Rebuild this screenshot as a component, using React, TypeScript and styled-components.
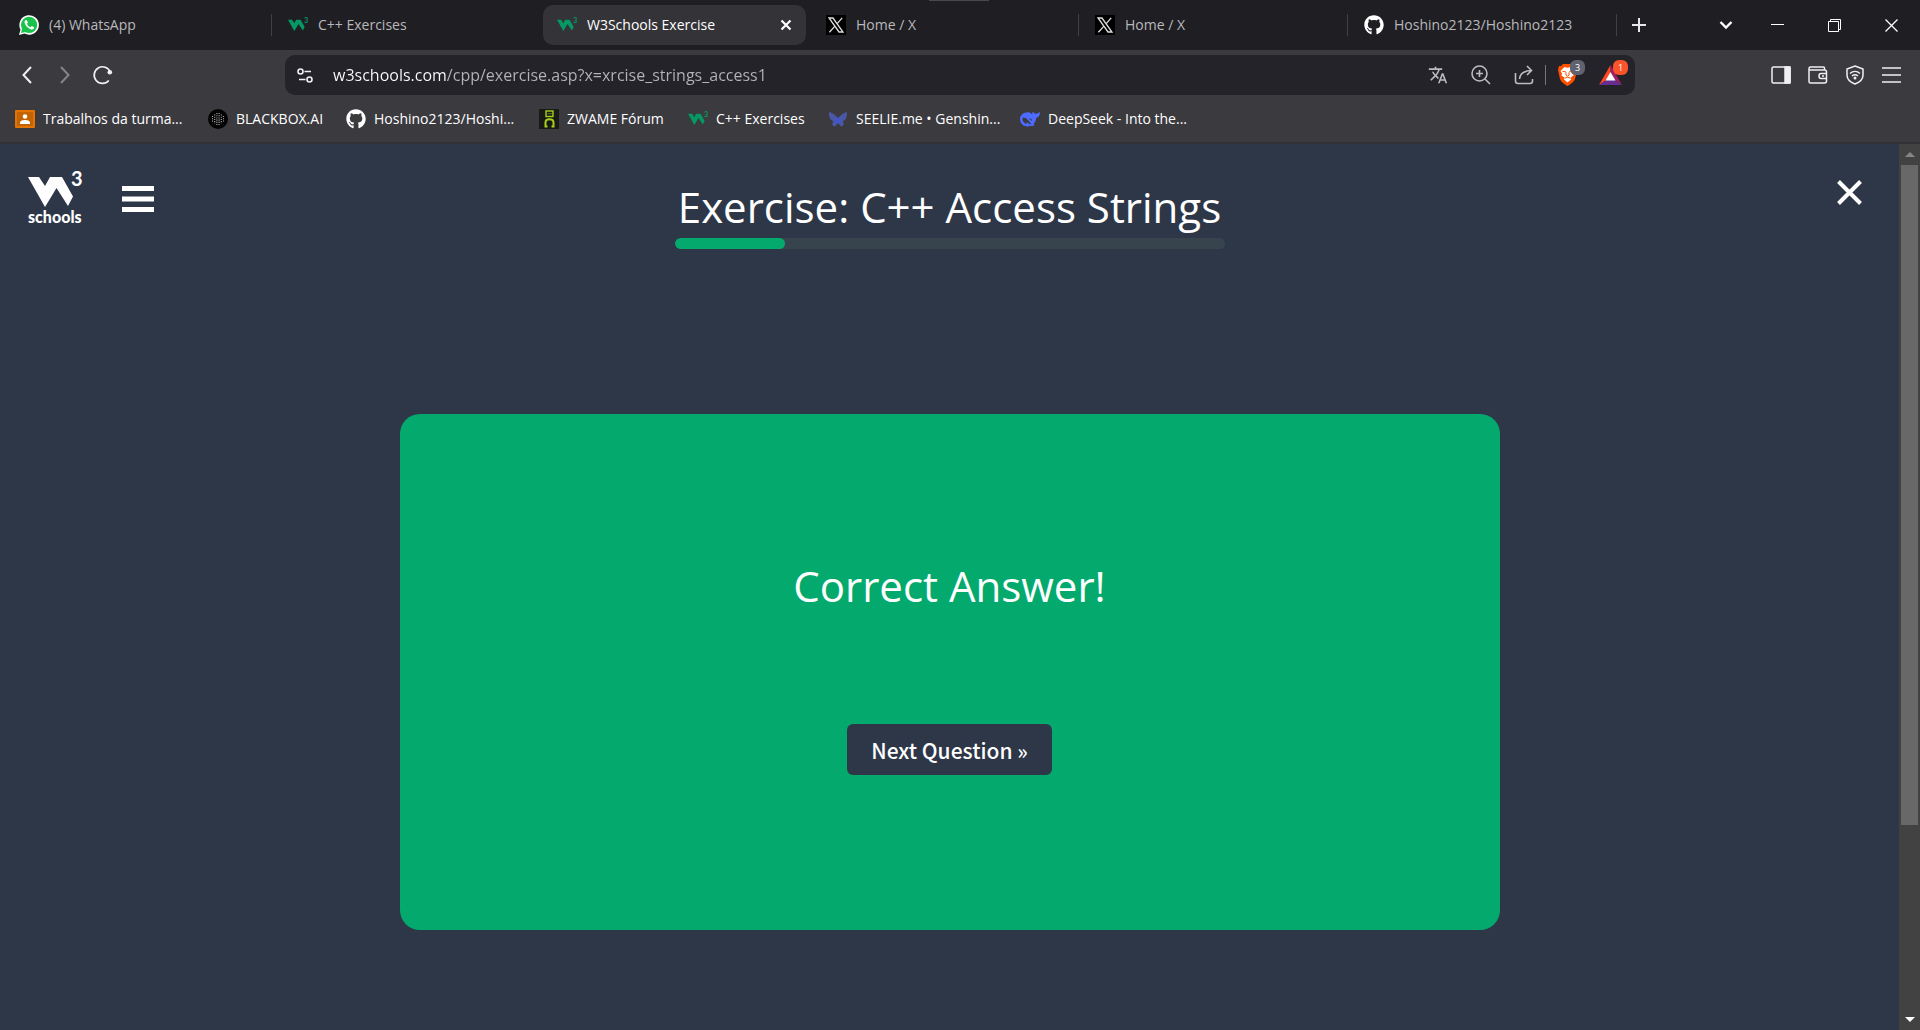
import React from "react";
import styled, { createGlobalStyle, css } from "styled-components";
import { FaGithub } from "react-icons/fa6";
import { MdTranslate } from "react-icons/md";

const ui = `"Open Sans", "Noto Sans", sans-serif`;
const c = {
  strip: "#1f1e23",
  bar: "#3b3a3f",
  field: "#242329",
  active: "#343338",
  page: "#2e3748",
  green: "#04aa6d",
};

const Global = createGlobalStyle`
  *, *::before, *::after { box-sizing: border-box; }
  body { margin: 0; background: ${c.page}; font-family: ${ui}; }
  button { font: inherit; color: inherit; border: 0; padding: 0; background: none; cursor: pointer; }
  a { color: inherit; text-decoration: none; }
  svg { display: block; flex: none; overflow: visible; }
`;

const Window = styled.div`
  display: flex;
  flex-direction: column;
  min-height: 100vh;
`;

/* ---------- browser chrome ---------- */

const TabStrip = styled.div`
  position: relative;
  display: flex;
  align-items: center;
  justify-content: space-between;
  height: 50px;
  padding-left: 3px;
  background: ${c.strip};
  color: #b9b9bc;
`;
const DragHandle = styled.div`
  position: absolute;
  top: 0;
  left: 50%;
  width: 60px;
  height: 1px;
  margin-left: -31px;
  background: #4a4a4c;
`;
const Tabs = styled.div`
  display: flex;
  align-items: center;
  flex: 1;
`;
const TabItem = styled.div<{ $line?: boolean }>`
  display: flex;
  align-items: center;
  flex: 0 1 269px;
  min-width: 0;
  height: 40px;
  padding: 0 3px 0 2px;
  border-right: 1px solid transparent;
  border-image: linear-gradient(
      transparent 25%,
      ${(p) => (p.$line ? "#414046" : "transparent")} 25% 75%,
      transparent 75%
    )
    1;
`;
const TabButton = styled.button<{ $active?: boolean }>`
  display: flex;
  align-items: center;
  gap: 10px;
  flex: 1;
  min-width: 0;
  height: 40px;
  padding: 0 14px;
  border-radius: 10px;
  font-size: 14px;
  line-height: 20px;
  text-align: left;
  white-space: nowrap;
  ${(p) =>
    p.$active &&
    css`
      background: ${c.active};
      color: #fff;
    `}
`;
const TabTitle = styled.span`
  flex: 1;
  overflow: hidden;
`;
const NewTab = styled.button`
  display: grid;
  place-items: center;
  width: 44px;
  height: 40px;
  color: #e8e8ea;
`;
const WindowControls = styled.div`
  display: flex;
`;
const WindowButton = styled.button<{ $w?: number }>`
  display: grid;
  place-items: center;
  width: ${(p) => p.$w ?? 57}px;
  height: 50px;
  color: #fff;
`;

const Toolbar = styled.div`
  display: flex;
  align-items: center;
  height: 50px;
  background: ${c.bar};
`;
const IconButton = styled.button<{ $dim?: boolean }>`
  display: grid;
  place-items: center;
  width: 38px;
  height: 40px;
  color: ${(p) => (p.$dim ? "#85848a" : "#f0f0f2")};
`;
const NavGroup = styled.div`
  display: flex;
  width: 285px;
  padding-left: 8px;
`;
const ToolGroup = styled.div`
  display: flex;
  justify-content: flex-end;
  width: 285px;
  padding-right: 10px;

  ${IconButton} {
    width: 37px;
  }
`;
const Address = styled.div`
  display: flex;
  align-items: center;
  flex: 1;
  min-width: 0;
  height: 40px;
  padding: 0 3px 0 1px;
  border-radius: 10px;
  background: ${c.field};
`;
/* The domain is painted white and the path grey by clipping a two-stop background to the text. */
const Url = styled.input`
  flex: 1;
  min-width: 0;
  height: 30px;
  padding: 0 0 0 9px;
  border: 0;
  outline: 0;
  background: linear-gradient(90deg, #fff 0 123px, #b4b4b9 123px);
  -webkit-background-clip: text;
  background-clip: text;
  color: transparent;
  font-family: ${ui};
  font-size: 16px;
  line-height: 24px;
`;
const FieldButton = styled(IconButton)`
  position: relative;
  width: 43px;
  color: #bcbcc0;
`;
const FieldLine = styled.span`
  width: 1px;
  height: 20px;
  background: #77777c;
`;
const Badge = styled.span<{ $bg: string }>`
  position: absolute;
  top: 5px;
  left: 24px;
  width: 15px;
  height: 15px;
  border-radius: 6px;
  background: ${(p) => p.$bg};
  color: #fff;
  font-size: 9px;
  line-height: 15px;
  text-align: center;
`;

const Bookmarks = styled.nav`
  display: grid;
  grid-template-columns: 193px 138px 193px 149px 140px 192px auto;
  justify-content: start;
  align-items: center;
  height: 44px;
  padding: 0 15px 5px;
  border-bottom: 2px solid #323136;
  background: ${c.bar};
  color: #fff;
`;
const Bookmark = styled.a`
  display: flex;
  align-items: center;
  gap: 8px;
  font-size: 14px;
  line-height: 20px;
  white-space: nowrap;
`;

/* ---------- page ---------- */

const Viewport = styled.div`
  display: flex;
  flex: 1;
  background: ${c.page};
`;
const Page = styled.main`
  flex: 1;
  min-width: 0;
  color: #fff;
`;
const Header = styled.header`
  display: grid;
  grid-template-columns: 1fr minmax(auto, 550px) 1fr;
  align-items: start;
  padding: 28px 28px 0;
`;
const HeaderLeft = styled.div`
  display: flex;
  align-items: center;
  gap: 40px;
`;
const Logo = styled.a`
  display: block;
  width: 54px;
`;
const LogoWord = styled.span`
  display: block;
  font-family: Lato, sans-serif;
  font-weight: 900;
  font-size: 16px;
  line-height: 17px;
`;
const PlainButton = styled.button`
  display: block;
`;
const CloseButton = styled(PlainButton)`
  justify-self: end;
  margin: 7px 8px 0 0;
`;
const Title = styled.h1`
  margin: 4px 0 0;
  font-weight: 400;
  font-size: 42px;
  line-height: 62px;
  text-align: center;
  white-space: nowrap;
`;
const Progress = styled.div`
  height: 11px;
  overflow: hidden;
  border-radius: 6px;
  background: #38444d;
`;
const ProgressFill = styled.div`
  height: 100%;
  border-radius: 6px;
  background: ${c.green};
`;
const Card = styled.section`
  display: flex;
  flex-direction: column;
  align-items: center;
  width: calc(100% - 48px);
  max-width: 1100px;
  margin: 165px auto 100px;
  padding: 141px 24px 155px;
  border-radius: 20px;
  background: ${c.green};
`;
const Result = styled.h2`
  margin: 0 0 107px;
  font-weight: 400;
  font-size: 42px;
  line-height: 62px;
`;
const NextButton = styled.button`
  height: 51px;
  padding: 0 24px;
  border-radius: 6px;
  background: ${c.page};
  color: #fff;
  font-family: "Noto Sans CJK SC", "Noto Sans", sans-serif;
  font-size: 21px;
  font-weight: 500;
  line-height: 30px;
`;
const ScrollTrack = styled.div`
  display: flex;
  flex-direction: column;
  width: 21px;
  background: #424242;
`;
const ScrollArrow = styled.button<{ $on?: boolean }>`
  display: grid;
  place-items: center;
  width: 21px;
  height: 21px;
  color: ${(p) => (p.$on ? "#fff" : "#868686")};
`;
const ScrollLane = styled.div`
  flex: 1;
  padding: 0 2px;
`;
const ScrollThumb = styled.div`
  height: 78.2%;
  background: #686868;
`;

/* ---------- icons ---------- */

const W3Mark = ({ w, color }: { w: number; color: string }) => (
  <svg width={w} height={(w * 36) / 54} viewBox="0 0 54 36" fill={color}>
    <path d="M0 5H11L17 14L22 5H34L45 24.5L40 34L28.5 16L17 35Z" />
    <text x="43" y="14" fontFamily="Lato, sans-serif" fontWeight="700" fontSize="20">
      3
    </text>
  </svg>
);
const W3Icon = () => <W3Mark w={20} color="#059862" />;

const WhatsAppIcon = () => (
  <svg width="20" height="20" viewBox="0 0 20 20">
    <path d="M0 20L1.5 14.6A9.8 9.8 0 1 1 5.5 18.6Z" fill="#fff" />
    <circle cx="10.1" cy="9.9" r="8.1" fill="#19c24b" />
    <path d="M2 18L3 13.6L6.5 17Z" fill="#19c24b" />
    <path
      d="M6.8 5.1C5.4 5.8 5.1 7.5 6.2 9.3C7.5 11.7 9.2 13.3 11.6 14.2C13.5 14.9 15 14 15.1 12.2L12.8 11L11.7 12.3C9.8 11.6 8.7 10.5 7.9 8.8L8.9 7.7L7.9 5.2Z"
      fill="#fff"
    />
  </svg>
);
const XIcon = () => (
  <svg width="20" height="20" viewBox="0 0 20 20">
    <rect width="20" height="20" fill="#000" />
    <path d="M3 3H7L17 17H13Z" fill="none" stroke="#ddd" strokeWidth="1.3" />
    <path d="M16.2 2.8L11.2 8.6M8.7 11.4L3.4 17.3" stroke="#ddd" strokeWidth="1.3" />
  </svg>
);
const ClassroomIcon = () => (
  <svg width="20" height="18" viewBox="0 0 20 18">
    <rect width="20" height="18" rx="1" fill="#e37400" />
    <rect x="2" y="2" width="16" height="14" fill="#c26401" />
    <circle cx="10" cy="6.5" r="2.3" fill="#fff" />
    <path d="M5 14V12.5C5 10.8 8 10 10 10S15 10.8 15 12.5V14Z" fill="#fff" />
  </svg>
);
const BlackboxIcon = () => (
  <svg width="20" height="20" viewBox="0 0 20 20">
    <circle cx="10" cy="10" r="10" fill="#030303" />
    <path
      d="M4.5 7V13M6.7 5.5V14.5M8.9 4V16M11.1 4V16M13.3 5.5V14.5M15.5 7V13"
      stroke="#b4b4b4"
      strokeWidth="1.1"
      strokeDasharray="1.1 1.1"
    />
  </svg>
);
const ZwameIcon = () => (
  <svg width="20" height="20" viewBox="0 0 20 20">
    <rect width="20" height="20" fill="#191a16" />
    <g fill="none" stroke="#a6cf1d">
      <rect x="7" y="2" width="7" height="5.5" strokeWidth="1.4" />
      <path d="M8.5 4.7H13" strokeWidth="1" stroke="#64782a" />
      <path d="M8.5 17.5H6.5V13.5C6.500 9 14.5 9 14.5 13.5V17.5H12.5" strokeWidth="2" />
    </g>
  </svg>
);
const ButterflyIcon = () => (
  <svg width="20" height="20" viewBox="0 0 20 20">
    <path
      d="M1 3C5 4 8 6 10 10C12 6 15 4 19 3C19 8 18 11 14.5 12.5C17 15 15 18 12.5 17L10 13.5L7.5 17C5 18 3 15 5.5 12.5C2 11 1 8 1 3Z"
      fill="#4b58a8"
    />
    <path d="M10 8L13 12L10 15L7 12Z" fill="#4254d6" />
  </svg>
);
const WhaleIcon = () => (
  <svg width="20" height="20" viewBox="0 0 20 20">
    <path
      d="M8 3.2C10 3 11 4.5 12.2 5.3C12.2 4 12.4 3 13.2 2.5C13.7 4.2 14.8 4.8 16 4.7C17.5 4.3 18.5 3.5 20 3.2C20 6.3 18.7 8.2 16.3 8.8C16 11.5 15 13.5 13.6 15.2L14.4 16.6C13 17.3 12 16.9 11 16.7C5 19 0 15.5 0 10C0 6 3.5 3.2 8 3.2Z"
      fill="#4d6bfe"
    />
    <path
      d="M2.5 9C5.5 8.3 7.8 10.6 9.5 13L11.5 15.3C9.5 15.2 8.3 14.2 7 13.2L6.2 15C4 14 2.3 12.3 2.5 9ZM9.2 9.7C10.8 9 12.2 10.2 12 12Z"
      fill={c.bar}
    />
  </svg>
);
const BatIcon = () => (
  <svg width="23" height="20" viewBox="0 0 23 20">
    <path d="M11.5 0L0 20L7.5 15L11.5 8Z" fill="#ff4724" />
    <path d="M11.5 0L23 20L15.5 15L11.5 8Z" fill="#9e1f63" />
    <path d="M0 20H23L15.5 15H7.5Z" fill="#662d91" />
    <path d="M11.5 7L16.5 15.5H6.5Z" fill="#fff" />
  </svg>
);
const BraveIcon = () => (
  <svg width="19" height="22" viewBox="0 0 19 22">
    <path d="M5 0H14L16 2H18L19 6L17 15C16 18 12 20.5 9.5 22C7 20.5 3 18 2 15L0 6L1 2H3Z" fill="#ff5000" />
    <path
      d="M6.5 3L9.5 3.8L12.5 3L16.5 7L15 9.5L15.5 11.5L12 14L13.3 15.3L9.5 18.5L5.7 15.3L7 14L3.5 11.5L4 9.5L2.5 7Z"
      fill="#fff"
    />
    <path
      d="M4.5 7.3L8 8M14.5 7.3L11 8M8.2 8.5L7.8 11L9.5 12.2L11.2 11L10.8 8.5M7 14L9.5 13.2L12 14"
      fill="none"
      stroke="#ff5000"
      strokeWidth="1"
    />
  </svg>
);

/** Shared attributes for outline icons. */
const line = (w = 1.5) => ({ fill: "none", stroke: "currentColor", strokeWidth: w });

type Site = "wa" | "w3" | "x" | "gh";
const Favicon = ({ site }: { site: Site }) => {
  if (site === "wa") return <WhatsAppIcon />;
  if (site === "w3") return <W3Icon />;
  if (site === "x") return <XIcon />;
  return <FaGithub size={20} color="#fff" />;
};

const tabs: { site: Site; title: string; active?: boolean; line?: boolean }[] = [
  { site: "wa", title: "(4) WhatsApp", line: true },
  { site: "w3", title: "C++ Exercises" },
  { site: "w3", title: "W3Schools Exercise", active: true },
  { site: "x", title: "Home / X", line: true },
  { site: "x", title: "Home / X", line: true },
  { site: "gh", title: "Hoshino2123/Hoshino2123", line: true },
];

const bookmarks: { icon: React.ReactNode; label: string }[] = [
  { icon: <ClassroomIcon />, label: "Trabalhos da turma..." },
  { icon: <BlackboxIcon />, label: "BLACKBOX.AI" },
  { icon: <FaGithub size={20} />, label: "Hoshino2123/Hoshi..." },
  { icon: <ZwameIcon />, label: "ZWAME Fórum" },
  { icon: <W3Icon />, label: "C++ Exercises" },
  { icon: <ButterflyIcon />, label: "SEELIE.me • Genshin..." },
  { icon: <WhaleIcon />, label: "DeepSeek - Into the..." },
];

const answered = 1;
const questions = 5;

export default function App() {
  return (
    <Window>
      <Global />
      <TabStrip>
        <DragHandle />
        <Tabs>
          {tabs.map((t, i) => (
            <TabItem key={i} $line={t.line}>
              <TabButton $active={t.active}>
                <Favicon site={t.site} />
                <TabTitle>{t.title}</TabTitle>
                {t.active && (
                  <svg width="12" height="12" viewBox="0 0 12 12" {...line(2.2)}>
                    <path d="M1.5 1.5L10.5 10.5M10.5 1.5L1.5 10.5" />
                  </svg>
                )}
              </TabButton>
            </TabItem>
          ))}
          <NewTab aria-label="New tab">
            <svg width="14" height="14" viewBox="0 0 14 14" {...line(2)}>
              <path d="M7 0V14M0 7H14" />
            </svg>
          </NewTab>
        </Tabs>
        <WindowControls>
          <WindowButton $w={46} aria-label="Search tabs">
            <svg width="14" height="10" viewBox="0 0 14 10" {...line(2.4)}>
              <path d="M1.5 2L7 7.5L12.5 2" />
            </svg>
          </WindowButton>
          <WindowButton aria-label="Minimize">
            <svg width="13" height="13" viewBox="0 0 13 13" {...line(1)}>
              <path d="M0 5.5H13" />
            </svg>
          </WindowButton>
          <WindowButton aria-label="Restore">
            <svg width="13" height="13" viewBox="0 0 13 13" {...line(1)}>
              <path d="M0.5 2.5H10.5V12.5H0.5ZM2.5 2.5V0.5H12.5V10.5H10.5" />
            </svg>
          </WindowButton>
          <WindowButton aria-label="Close">
            <svg width="13" height="13" viewBox="0 0 13 13" {...line(1.3)}>
              <path d="M0.5 0.5L12.5 12.5M12.5 0.5L0.5 12.5" />
            </svg>
          </WindowButton>
        </WindowControls>
      </TabStrip>

      <Toolbar>
        <NavGroup>
          <IconButton aria-label="Back">
            <svg width="10" height="18" viewBox="0 0 10 18" {...line(2)}>
              <path d="M9 1L1.5 9L9 17" />
            </svg>
          </IconButton>
          <IconButton $dim aria-label="Forward">
            <svg width="10" height="18" viewBox="0 0 10 18" {...line(2)}>
              <path d="M1 1L8.5 9L1 17" />
            </svg>
          </IconButton>
          <IconButton aria-label="Reload">
            <svg width="20" height="20" viewBox="0 0 20 20" {...line(1.7)}>
              <path d="M15.8 15.5A8.3 8.3 0 1 1 17.2 7" />
              <circle cx="16.8" cy="7.3" r="2.3" fill="currentColor" stroke="none" />
            </svg>
          </IconButton>
        </NavGroup>
        <Address>
          <IconButton aria-label="Site settings">
            <svg width="16" height="15" viewBox="0 0 16 15" {...line(1.6)}>
              <circle cx="3.5" cy="3.5" r="2.5" />
              <circle cx="12.5" cy="11.5" r="2.5" />
              <path d="M7.5 3.5H14M2 11.5H8.5" />
            </svg>
          </IconButton>
          <Url
            aria-label="Address"
            defaultValue="w3schools.com/cpp/exercise.asp?x=xrcise_strings_access1"
            spellCheck={false}
          />
          <FieldButton aria-label="Translate">
            <MdTranslate size={20} />
          </FieldButton>
          <FieldButton aria-label="Zoom">
            <svg width="20" height="20" viewBox="0 0 20 20" {...line(1.6)}>
              <circle cx="8.5" cy="8.5" r="7.5" />
              <path d="M14 14L19 19M8.5 5V12M5 8.5H12" />
            </svg>
          </FieldButton>
          <FieldButton aria-label="Share">
            <svg width="20" height="20" viewBox="0 0 20 20" {...line(1.6)}>
              <path d="M1.5 8V16C1.5 18 2 18.5 4 18.5H16C18 18.5 18.5 18 18.5 16V14" />
              <path d="M5.5 14C6 8.5 9.5 6 17 5.5M13 1L17.5 5.5L13 10" />
            </svg>
          </FieldButton>
          <FieldLine />
          <FieldButton aria-label="Brave Shields">
            <BraveIcon />
            <Badge $bg="#606270">3</Badge>
          </FieldButton>
          <FieldButton aria-label="Brave Rewards">
            <BatIcon />
            <Badge $bg="#fb542b">1</Badge>
          </FieldButton>
        </Address>
        <ToolGroup>
          <IconButton aria-label="Sidebar">
            <svg width="20" height="18" viewBox="0 0 20 18" {...line(1.5)}>
              <rect x="1" y="1" width="18" height="16" rx="1.5" />
              <path d="M14 1H19V17H14Z" fill="currentColor" />
            </svg>
          </IconButton>
          <IconButton aria-label="Wallet">
            <svg width="20" height="18" viewBox="0 0 20 18" {...line(1.5)}>
              <path d="M16.5 4V2C16.5 1.3 16 1 15.5 1H2.5C1.5 1 1 1.5 1 2.5V15.5C1 16.5 1.5 17 2.5 17H16.5C18 17 18.5 16.5 18.5 15V6C18.5 4.5 18 4 16.5 4H1.5M18.5 7.5H13C11.5 7.5 11 8.5 11 10S11.5 12.5 13 12.5H18.5M14 10H16" />
            </svg>
          </IconButton>
          <IconButton aria-label="VPN">
            <svg width="18" height="20" viewBox="0 0 18 20" {...line(1.5)}>
              <path d="M9 1L17 4V10C17 14.5 13 17.5 9 19C5 17.5 1 14.5 1 10V4Z" />
              <path d="M4 8.5C7 5.7 11 5.7 14 8.5M6 11C8 9.3 10 9.3 12 11" />
              <circle cx="9" cy="13" r="1.5" fill="currentColor" stroke="none" />
            </svg>
          </IconButton>
          <IconButton aria-label="Menu">
            <svg width="19" height="16" viewBox="0 0 19 16" {...line(1.6)}>
              <path d="M0 1H19M0 8H19M0 15H19" />
            </svg>
          </IconButton>
        </ToolGroup>
      </Toolbar>

      <Bookmarks>
        {bookmarks.map((b) => (
          <Bookmark key={b.label} href="#bookmark">
            {b.icon}
            {b.label}
          </Bookmark>
        ))}
      </Bookmarks>

      <Viewport>
        <Page>
          <Header>
            <HeaderLeft>
              <Logo href="#home" aria-label="W3Schools home">
                <W3Mark w={54} color="#fff" />
                <LogoWord>schools</LogoWord>
              </Logo>
              <PlainButton aria-label="Exercises menu">
                <svg width="32" height="26" viewBox="0 0 32 26" {...line(5)}>
                  <path d="M0 2.5H32M0 13H32M0 23.5H32" />
                </svg>
              </PlainButton>
            </HeaderLeft>
            <div>
              <Title>Exercise: C++ Access Strings</Title>
              <Progress
                role="progressbar"
                aria-label="Exercise progress"
                aria-valuenow={answered}
                aria-valuemax={questions}
              >
                <ProgressFill style={{ width: `${(answered / questions) * 100}%` }} />
              </Progress>
            </div>
            <CloseButton aria-label="Close exercise">
              <svg width="27" height="27" viewBox="0 0 27 27" {...line(4)}>
                <path d="M2.5 2.5L24.5 24.5M24.5 2.5L2.5 24.5" />
              </svg>
            </CloseButton>
          </Header>
          <Card>
            <Result>Correct Answer!</Result>
            <NextButton>Next Question »</NextButton>
          </Card>
        </Page>
        <ScrollTrack>
          <ScrollArrow aria-label="Scroll up">
            <svg width="10" height="5" viewBox="0 0 10 5" fill="currentColor">
              <path d="M5 0L10 5H0Z" />
            </svg>
          </ScrollArrow>
          <ScrollLane>
            <ScrollThumb />
          </ScrollLane>
          <ScrollArrow $on aria-label="Scroll down">
            <svg width="10" height="5" viewBox="0 0 10 5" fill="currentColor">
              <path d="M0 0H10L5 5Z" />
            </svg>
          </ScrollArrow>
        </ScrollTrack>
      </Viewport>
    </Window>
  );
}
